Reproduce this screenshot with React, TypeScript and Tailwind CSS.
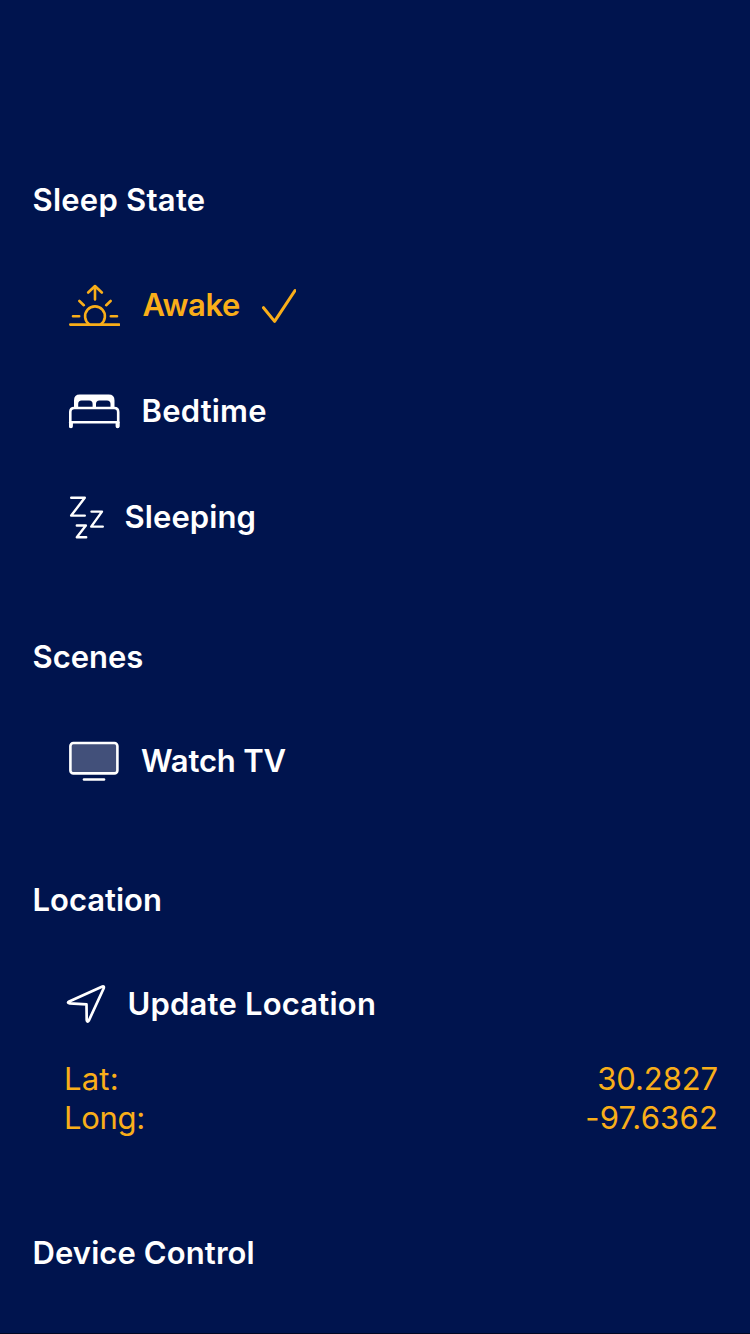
import type { ReactNode } from 'react';

function Icon({ box, className, children }: { box: string; className: string; children: ReactNode }) {
  return (
    <svg
      viewBox={box}
      className={`h-12 shrink-0 ${className}`}
      fill="none"
      stroke="currentColor"
      strokeWidth="2.6"
      strokeLinecap="round"
      strokeLinejoin="round"
      aria-hidden="true"
    >
      {children}
    </svg>
  );
}

function SunriseIcon() {
  return (
    <Icon box="0 0 56 48" className="w-14">
      <path d="M6.3 43.6H55.2M31 18.5V5.5M24.2 11.5L31 5L37.8 11.5M15.4 20L19.8 24.2M46.6 20L42.2 24.2M9 35.2H15.2M46.8 35.2H53" />
      <path d="M25.2 43.3A9.9 9.9 0 1 1 36.8 43.3" />
    </Icon>
  );
}

function CheckIcon() {
  return (
    <Icon box="0 0 40 48" className="ml-[17px] w-10">
      <path d="M7.5 26.7L18.6 40.4L39 9.5" strokeWidth="3" />
    </Icon>
  );
}

function BedIcon() {
  return (
    <Icon box="0 0 56 48" className="w-14">
      <path
        d="M10 22V13.5Q10 7.6 15.8 7.6H44.7Q50.5 7.6 50.5 13.5V22H46.5V17Q46.5 13.5 43 13.5H35.4Q32 13.5 32 17V22H28.6V17Q28.6 13.5 25.2 13.5H17.5Q14.2 13.5 14.2 17V22Z"
        fill="currentColor"
        stroke="none"
      />
      <path d="M6.3 39.5V25Q6.3 21 10.3 21H50.2Q54.2 21 54.2 25V39.5" strokeWidth="2.6" />
      <path d="M6.3 35.3H54.2" strokeWidth="2.6" />
      <path d="M7 36V39.3M53.5 36V39.3" strokeWidth="3.8" />
    </Icon>
  );
}

function SleepIcon() {
  return (
    <Icon box="0 0 44 48" className="w-11">
      <path d="M7.2 4.8H20.8L7.2 22.6H20.8" strokeWidth="2.4" />
      <path d="M27.5 18.6H38L27.2 33.6H38.8" strokeWidth="2.4" />
      <path d="M12.8 32.5H21.9L12.8 44.3H22.2" strokeWidth="2.4" />
    </Icon>
  );
}

function TvIcon() {
  return (
    <Icon box="0 0 56 48" className="w-14">
      <rect x="6.4" y="6" width="47" height="30.4" rx="3" fill="#42507a" />
      <path d="M20 42.5H40" />
    </Icon>
  );
}

function LocationIcon() {
  return (
    <Icon box="0 0 44 48" className="w-11">
      <path d="M5.2 21.4L37.3 6.9Q40.9 5.4 39.5 8.8L25 40.2Q23.2 43.2 22.7 40L22.5 24.4L5.7 23.4Q2.7 22.8 5.2 21.4Z" strokeWidth="2.7" />
    </Icon>
  );
}

function Row({ icon, label, offset, active = false }: { icon: ReactNode; label: string; offset: string; active?: boolean }) {
  return (
    <button type="button" className={`flex h-12 items-center pl-16 text-left ${active ? 'text-[#f9ae19]' : ''}`}>
      {icon}
      <span className={`whitespace-nowrap ${offset}`}>{label}</span>
      {active && <CheckIcon />}
    </button>
  );
}

function Section({ title, className, children }: { title: string; className: string; children?: ReactNode }) {
  return (
    <section className={className}>
      <h2 className="pl-[32.5px] whitespace-nowrap">{title}</h2>
      {children}
    </section>
  );
}

export default function App() {
  return (
    <main className="h-[1334px] w-[750px] overflow-hidden border-b border-[#000825] bg-[#00144e] pt-[180px] font-['Inter',sans-serif] text-[31px] leading-10 font-semibold text-white">
      <Section title="Sleep State" className="h-[457px] tracking-[0.25px]">
        <div className="mt-[61px] flex flex-col gap-[58px]">
          <Row icon={<SunriseIcon />} label="Awake" offset="ml-[22.5px] w-[96.5px] tracking-[-0.4px]" active />
          <Row icon={<BedIcon />} label="Bedtime" offset="ml-[21.5px] tracking-[0.2px]" />
          <Row icon={<SleepIcon />} label="Sleeping" offset="ml-[16.5px] tracking-[0.1px]" />
        </div>
      </Section>
      <Section title="Scenes" className="h-[243px]">
        <div className="mt-[60px]">
          <Row icon={<TvIcon />} label="Watch TV" offset="ml-[21px] tracking-[-0.15px]" />
        </div>
      </Section>
      <Section title="Location" className="h-[353px]">
        <div className="mt-[60px]">
          <Row icon={<LocationIcon />} label="Update Location" offset="ml-[19.5px] tracking-[0.2px]" />
        </div>
        <dl className="mt-[31px] pr-8 pl-16 leading-[39px] font-normal text-[#f9ae19]">
          <div className="flex justify-between">
            <dt className="tracking-[0.2px]">Lat:</dt>
            <dd className="tracking-[-0.1px]">30.2827</dd>
          </div>
          <div className="flex justify-between">
            <dt className="tracking-[-0.3px]">Long:</dt>
            <dd className="tracking-[0.2px]">-97.6362</dd>
          </div>
        </dl>
      </Section>
      <Section title="Device Control" className="h-[100px] tracking-[0.1px]" />
    </main>
  );
}
